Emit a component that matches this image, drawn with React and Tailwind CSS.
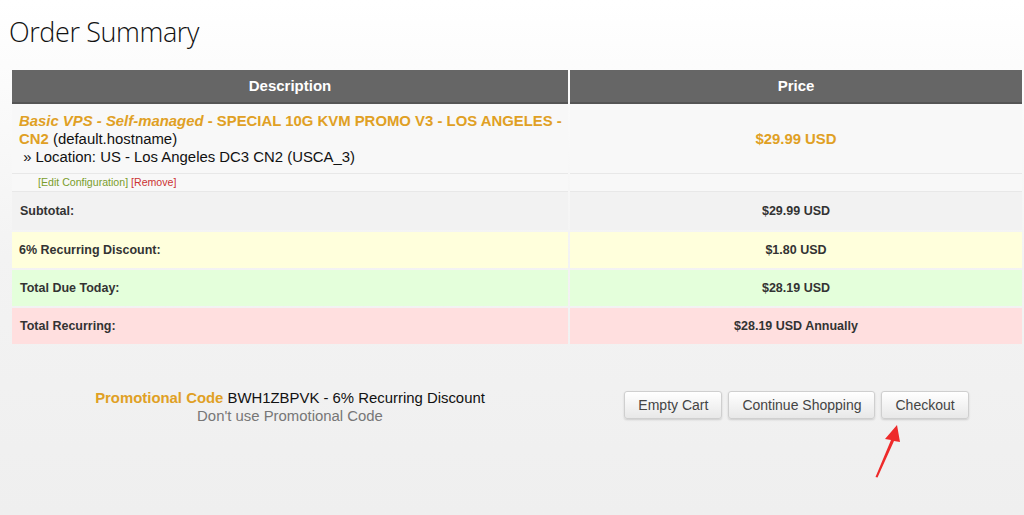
const font = { fontFamily: '"Liberation Sans", Arial, sans-serif' };

function Btn({ children }) {
  return (
    <button className="h-[28px] px-[13px] rounded-[3px] border border-[#cfcfcf] bg-gradient-to-b from-white to-[#e8e8e8] shadow-[0_1px_2px_rgba(0,0,0,0.15)] text-[14px] text-[#444]">
      {children}
    </button>
  );
}

export default function App() {
  return (
    <div
      className="relative w-[1024px] h-[515px] overflow-hidden bg-gradient-to-b from-white via-[#f3f3f3] to-[#efefef] text-[#333]"
      style={font}
    >
      {/* TITLE */}
      <h1
        className="pl-[9px] pt-[12px] h-[70px] text-[27px] leading-[40px] font-light text-[#111] tracking-[-0.4px]"
        style={{ fontFamily: '"Open Sans", sans-serif' }}
      >
        Order Summary
      </h1>

      {/* TABLE */}
      <div className="ml-[12px] w-[1010px] grid grid-cols-[556px_452px] gap-x-[2px]">
        <div className="h-[34px] bg-[#666] border-b-[2px] border-[#555] flex items-center justify-center text-white font-bold text-[15px]">
          Description
        </div>
        <div className="h-[34px] bg-[#666] border-b-[2px] border-[#555] flex items-center justify-center text-white font-bold text-[15px]">
          Price
        </div>

        {/* product */}
        <div className="h-[70px] bg-[#f8f8f8] border-b border-[#e8e8e8] pl-[7px] pr-[6px] pt-[8px] text-[14.9px] leading-[18px] text-[#111]">
          <span className="text-[#e0a024] font-bold">
            <i>Basic VPS - Self-managed</i> - SPECIAL 10G KVM PROMO V3 - LOS ANGELES - CN2
          </span>{" "}
          (default.hostname)
          <br />
          &nbsp;» Location: US - Los Angeles DC3 CN2 (USCA_3)
        </div>
        <div className="h-[70px] bg-[#f8f8f8] border-b border-[#e8e8e8] flex items-center justify-center pt-[1px] text-[14.9px] font-bold text-[#e0a024]">
          $29.99 USD
        </div>

        <div className="h-[18px] bg-[#f8f8f8] border-b border-[#e8e8e8] pl-[26px] text-[10.6px] leading-[17px]">
          <span className="text-[#7a9d2c]">[Edit Configuration]</span>{" "}
          <span className="text-[#cc3333]">[Remove]</span>
        </div>
        <div className="h-[18px] bg-[#f8f8f8] border-b border-[#e8e8e8]"></div>

        {/* totals */}
        <div className="h-[38px] bg-[#f2f2f2] flex items-center pl-[8px] text-[12.5px] font-bold">Subtotal:</div>
        <div className="h-[38px] bg-[#f2f2f2] flex items-center justify-center text-[12.5px] font-bold">$29.99 USD</div>

        <div className="mt-[2px] h-[36px] bg-[#ffffdc] flex items-center pl-[7px] text-[12.5px] font-bold">6% Recurring Discount:</div>
        <div className="mt-[2px] h-[36px] bg-[#ffffdc] flex items-center justify-center text-[12.5px] font-bold">$1.80 USD</div>

        <div className="mt-[2px] h-[36px] bg-[#e4ffdb] flex items-center pl-[8px] text-[12.5px] font-bold">Total Due Today:</div>
        <div className="mt-[2px] h-[36px] bg-[#e4ffdb] flex items-center justify-center text-[12.5px] font-bold">$28.19 USD</div>

        <div className="mt-[2px] h-[36px] bg-[#ffdfdf] flex items-center pl-[8px] text-[12.5px] font-bold">Total Recurring:</div>
        <div className="mt-[2px] h-[36px] bg-[#ffdfdf] flex items-center justify-center text-[12.5px] font-bold">$28.19 USD Annually</div>
      </div>

      {/* BOTTOM */}
      <div className="ml-[12px] w-[1010px] mt-[47px] grid grid-cols-[556px_452px] gap-x-[2px]">
        <div className="text-center text-[14.9px] leading-[18px] -mt-[2px]">
          <div className="text-[#111]">
            <span className="text-[#e0a024] font-bold">Promotional Code</span> BWH1ZBPVK - 6% Recurring Discount
          </div>
          <div className="text-[#777]">Don't use Promotional Code</div>
        </div>
        <div className="flex justify-center gap-[6px] pl-[1px]">
          <Btn>Empty Cart</Btn>
          <Btn>Continue Shopping</Btn>
          <Btn>Checkout</Btn>
        </div>
      </div>

      {/* red annotation arrow */}
      <svg className="absolute left-[870px] top-[420px]" width="40" height="62" viewBox="0 0 40 62">
        <polygon points="27,5 15,19 21,20 5.5,57 7.5,57.5 24,21 30,22" fill="#ee2a2a" />
      </svg>
    </div>
  );
}
